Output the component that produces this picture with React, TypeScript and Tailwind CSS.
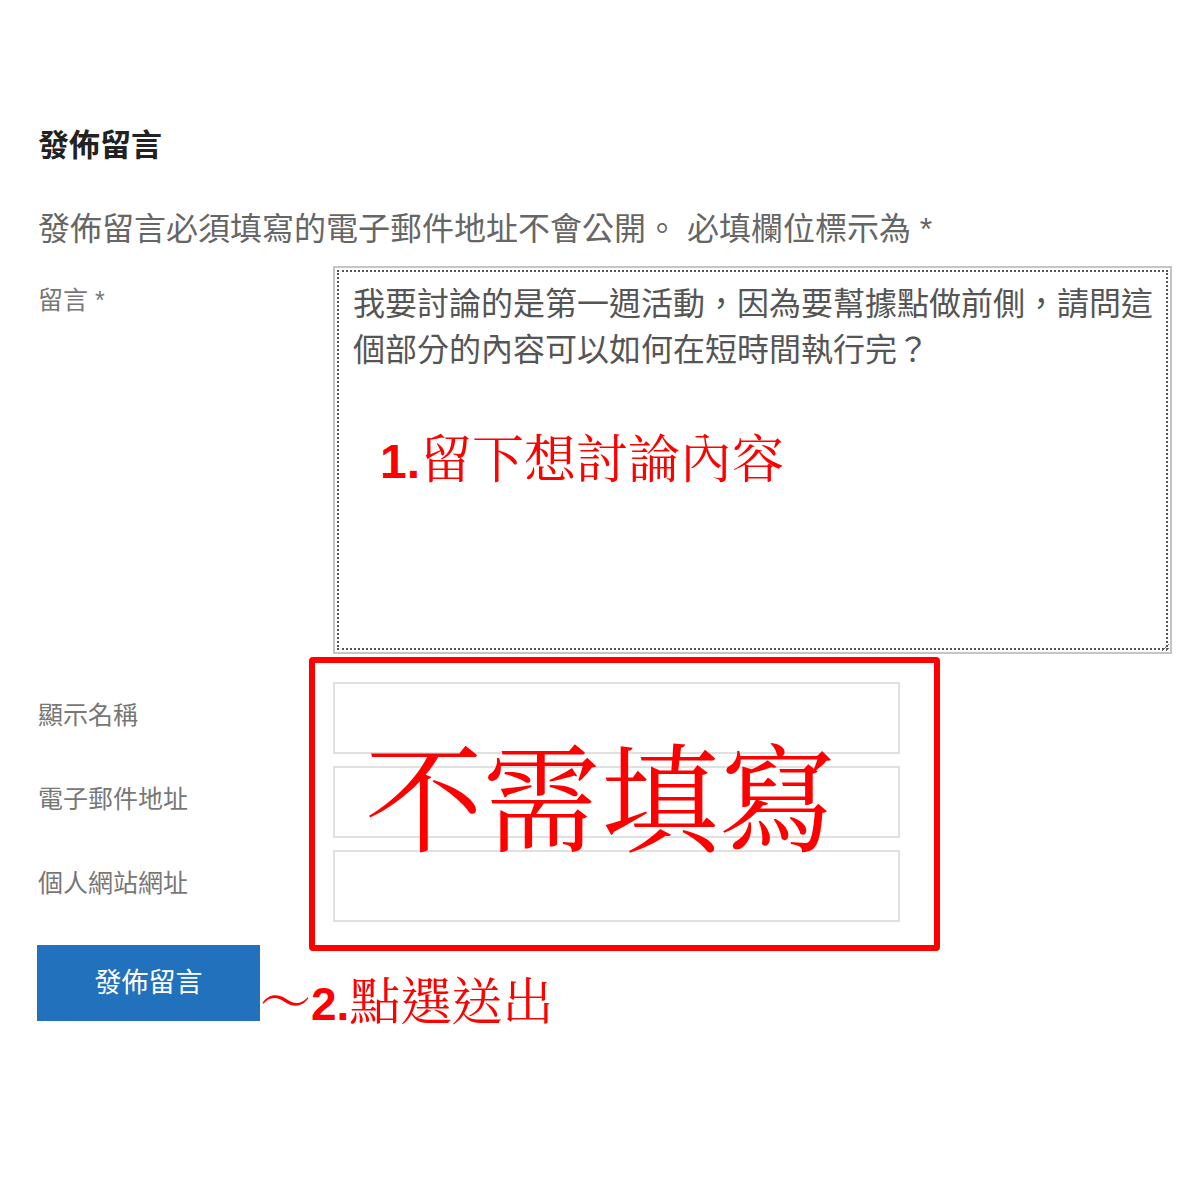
import React from "react";

const sans = "font-['Liberation_Sans','Noto_Sans_CJK_TC',sans-serif]";
const redFont = "font-['Noto_Serif_CJK_TC','Noto_Sans_CJK_TC',serif]";

const fields = ["顯示名稱", "電子郵件地址", "個人網站網址"];

const App: React.FC = () => {
  return (
    <div className={`relative w-[1200px] h-[1200px] bg-white overflow-hidden ${sans}`}>
      <div className="pl-[38px] pt-[126px]">
        {/* Title */}
        <h3 className="text-[31px] leading-[40px] font-bold text-[#222]">發佈留言</h3>

        <p className="mt-[41px] text-[32px] leading-[44px] text-[#666]">
          發佈留言必須填寫的電子郵件地址不會公開。 必填欄位標示為 *
        </p>

        {/* Comment */}
        <div className="mt-[15px] flex">
          <label className="w-[295px] pt-[18px] text-[25px] leading-[32px] text-[#777]">留言 *</label>
          <textarea
            className="w-[839px] h-[388px] border-2 border-[#c4c4c4] bg-white pt-[13px] pl-[18px] pr-[4px] text-[32px] leading-[46px] text-[#555] outline-2 outline-dotted outline-[#555] -outline-offset-[6px] whitespace-pre overflow-hidden"
            defaultValue={"我要討論的是第一週活動，因為要幫據點做前側，請問這\n個部分的內容可以如何在短時間執行完？"}
          />
        </div>

        {/* Other fields */}
        <div className="mt-[28px] flex flex-col gap-[12px]">
          {fields.map((f) => (
            <div key={f} className="flex items-center">
              <label className="w-[295px] text-[25px] leading-[32px] text-[#777] -mt-[6px]">{f}</label>
              <input className="w-[567px] h-[72px] border-2 border-[#e0e0e0] bg-white" />
            </div>
          ))}
        </div>

        {/* Submit */}
        <div className="mt-[23px] flex items-start">
          <button className="w-[223px] h-[76px] bg-[#2271bd] text-white text-[27px] -ml-px">發佈留言</button>
          <span className={`mt-[28px] text-[51px] leading-none text-[#ff0000] ${redFont}`}>
            ～<span className={`font-bold text-[46px] ${sans}`}>2.</span>點選送出
          </span>
        </div>
      </div>

      {/* Annotations */}
      <div className="absolute left-[309px] top-[657px] w-[631px] h-[294px] border-[6px] border-[#ff0000] rounded-[4px] pointer-events-none" />
      <div className={`absolute left-[365px] top-[733px] text-[118px] leading-none text-[#ff0000] pointer-events-none ${redFont}`}>
        不需填寫
      </div>
      <div className={`absolute left-[380px] top-[430px] text-[52px] leading-none text-[#ff0000] pointer-events-none ${redFont}`}>
        <span className={`font-bold text-[48px] ${sans}`}>1.</span>留下想討論內容
      </div>
    </div>
  );
};

export default App;
